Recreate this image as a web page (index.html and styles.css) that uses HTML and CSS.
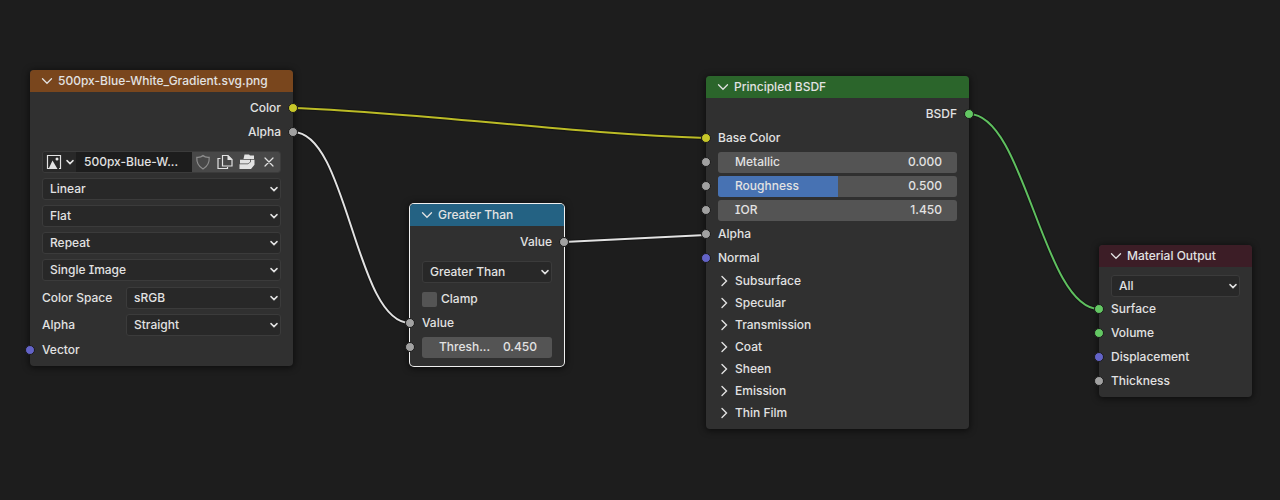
FILE: index.html
```html
<!DOCTYPE html>
<html lang="en">
<head>
<meta charset="utf-8">
<title>Shader Editor</title>
<link rel="stylesheet" href="styles.css">
</head>
<body>
<svg class="defs" aria-hidden="true">
  <symbol id="down" viewBox="0 0 12 12"><path d="M1.5 3.8 6 8.3l4.500-4.500" fill="none" stroke="currentColor" stroke-width="1.3" stroke-linecap="round"/></symbol>
  <symbol id="right" viewBox="0 0 12 12"><path d="M4 1.500 8.500 6 4 10.500" fill="none" stroke="currentColor" stroke-width="1.4" stroke-linecap="round"/></symbol>
  <symbol id="drop" viewBox="0 0 8 8"><path d="M1 2.600 4 5.600l3-3" fill="none" stroke="currentColor" stroke-width="1.5" stroke-linecap="round"/></symbol>
</svg>
<main class="canvas">
  <svg class="links" aria-hidden="true">
    <g class="link-shadow">
      <path d="M293 108C430 113 570 134 706 138"/>
      <path d="M293 132C348 132 355 323 410 323"/>
      <path d="M564 242 706 235"/>
      <path d="M969 114C1025 114 1043 309 1099 309"/>
    </g>
    <path class="link yellow" d="M293 108C430 113 570 134 706 138"/>
    <path class="link white" d="M293 132C348 132 355 323 410 323"/>
    <path class="link white" d="M564 242 706 235"/>
    <path class="link green" d="M969 114C1025 114 1043 309 1099 309"/>
  </svg>

  <section class="node node-image">
    <header class="head head-texture"><button class="fold" aria-label="Collapse"><svg><use href="#down"/></svg></button><h2>500px-Blue-White_Gradient.svg.png</h2></header>
    <div class="body">
      <div class="row out">Color<i class="socket color"></i></div>
      <div class="row out">Alpha<i class="socket float"></i></div>
      <div class="options">
        <div class="datablock">
          <button class="browse" aria-label="Browse image">
            <svg class="icon" viewBox="0 0 16 16"><path d="M4 14.500H1.500v-13h13v13H13" fill="none" stroke="currentColor" stroke-width="1.200"/><path d="M2.500 15 6.500 6.500l5 8.500z" fill="currentColor"/><circle cx="11" cy="5" r="1.500" fill="currentColor"/></svg>
            <svg class="caret"><use href="#drop"/></svg>
          </button>
          <input class="name" aria-label="Image name" value="500px-Blue-W...">
          <button class="tool dim" aria-label="Fake user"><svg class="icon" viewBox="0 0 16 16"><path d="M8 1.500C6.500 3 4 3.500 1.800 3.300 1.500 8 3.500 12.500 8 15c4.500-2.500 6.500-7 6.200-11.700C12 3.500 9.500 3 8 1.500z" fill="none" stroke="currentColor" stroke-width="1.200"/></svg></button>
          <button class="tool" aria-label="New image"><svg class="icon" viewBox="0 0 16 16"><path d="M3.500 4.500H1v10h9.500V13M5.500 1.500h5.500l4 4v6.500H5.500z" fill="none" stroke="currentColor" stroke-width="1.200"/><path d="M10.500 1v5H15.500z" fill="currentColor"/></svg></button>
          <button class="tool" aria-label="Open image"><svg class="icon" viewBox="0 0 16 16"><path d="M5.500.5H10l1 1h4V5H4.500zM1 5.800h10V8L9 9.500H1zM.500 10.300H9L11.800 8V5.800h3.700v5L12 15H.500z" fill="currentColor"/></svg></button>
          <button class="tool" aria-label="Unlink"><svg class="icon" viewBox="0 0 16 16"><path d="m4 4 8 8m0-8-8 8" fill="none" stroke="currentColor" stroke-width="1.200" stroke-linecap="round"/></svg></button>
        </div>
        <div class="menu"><select aria-label="Interpolation"><option>Linear</option></select><svg class="caret"><use href="#drop"/></svg></div>
        <div class="menu"><select aria-label="Projection"><option>Flat</option></select><svg class="caret"><use href="#drop"/></svg></div>
        <div class="menu"><select aria-label="Extension"><option>Repeat</option></select><svg class="caret"><use href="#drop"/></svg></div>
        <div class="menu"><select aria-label="Source"><option>Single Image</option></select><svg class="caret"><use href="#drop"/></svg></div>
      </div>
      <div class="props">
        <label for="space">Color Space</label>
        <div class="menu"><select id="space"><option>sRGB</option></select><svg class="caret"><use href="#drop"/></svg></div>
        <label for="alpha">Alpha</label>
        <div class="menu"><select id="alpha"><option>Straight</option></select><svg class="caret"><use href="#drop"/></svg></div>
      </div>
      <div class="row"><i class="socket vector"></i>Vector</div>
    </div>
  </section>

  <section class="node node-math">
    <header class="head head-math"><button class="fold" aria-label="Collapse"><svg><use href="#down"/></svg></button><h2>Greater Than</h2></header>
    <div class="body">
      <div class="row out">Value<i class="socket float"></i></div>
      <div class="options">
        <div class="menu"><select aria-label="Operation"><option>Greater Than</option></select><svg class="caret"><use href="#drop"/></svg></div>
      </div>
      <label class="row check"><input type="checkbox">Clamp</label>
      <div class="row"><i class="socket float"></i>Value</div>
      <div class="row"><i class="socket float"></i><div class="field"><label for="threshold">Thresh...</label><input id="threshold" value="0.450"></div></div>
    </div>
  </section>

  <section class="node node-bsdf">
    <header class="head head-shader"><button class="fold" aria-label="Collapse"><svg><use href="#down"/></svg></button><h2>Principled BSDF</h2></header>
    <div class="body">
      <div class="row out">BSDF<i class="socket shader"></i></div>
      <div class="row"><i class="socket color"></i>Base Color</div>
      <div class="row"><i class="socket float"></i><div class="field"><label for="metallic">Metallic</label><input id="metallic" value="0.000"></div></div>
      <div class="row"><i class="socket float"></i><div class="field"><span class="fill" style="width:50%"></span><label for="roughness">Roughness</label><input id="roughness" value="0.500"></div></div>
      <div class="row"><i class="socket float"></i><div class="field"><label for="ior">IOR</label><input id="ior" value="1.450"></div></div>
      <div class="row"><i class="socket float"></i>Alpha</div>
      <div class="row"><i class="socket vector"></i>Normal</div>
      <button class="panel"><svg><use href="#right"/></svg>Subsurface</button>
      <button class="panel"><svg><use href="#right"/></svg>Specular</button>
      <button class="panel"><svg><use href="#right"/></svg>Transmission</button>
      <button class="panel"><svg><use href="#right"/></svg>Coat</button>
      <button class="panel"><svg><use href="#right"/></svg>Sheen</button>
      <button class="panel"><svg><use href="#right"/></svg>Emission</button>
      <button class="panel"><svg><use href="#right"/></svg>Thin Film</button>
    </div>
  </section>

  <section class="node node-output">
    <header class="head head-output"><button class="fold" aria-label="Collapse"><svg><use href="#down"/></svg></button><h2>Material Output</h2></header>
    <div class="body">
      <div class="menu"><select aria-label="Target"><option>All</option></select><svg class="caret"><use href="#drop"/></svg></div>
      <div class="row"><i class="socket shader"></i>Surface</div>
      <div class="row"><i class="socket shader"></i>Volume</div>
      <div class="row"><i class="socket vector"></i>Displacement</div>
      <div class="row"><i class="socket float"></i>Thickness</div>
    </div>
  </section>
</main>
</body>
</html>
```
FILE: styles.css
```css
* { box-sizing: border-box; }

body {
  margin: 0;
  background: #1d1d1d;
  color: #e2e2e2;
  font: 500 12px/22px Inter, "Liberation Sans", sans-serif;
  font-feature-settings: "cv08";
}

button, input, select {
  margin: 0;
  padding: 0;
  border: 0;
  background: none;
  color: inherit;
  font: inherit;
  font-feature-settings: inherit;
}

.defs { position: absolute; width: 0; height: 0; }

.canvas {
  position: relative;
  min-height: 100vh;
  overflow: hidden;
}

.links { position: absolute; inset: 0; width: 100%; height: 100%; fill: none; }
.link-shadow { stroke: #151515; stroke-width: 4; }
.link { stroke-width: 2; }
.yellow { stroke: #bcbc26; }
.white { stroke: #e2e2e2; }
.green { stroke: #5fc05f; }

/* Nodes */
.node {
  position: absolute;
  border-radius: 4px;
  background: #303030;
  box-shadow: 0 1px 6px 1px rgba(0, 0, 0, .55);
}
.node-image { left: 30px; top: 70px; width: 263px; }
.node-math {
  left: 410px;
  top: 204px;
  width: 154px;
  box-shadow: 0 0 0 1px #f0f0f0, 0 1px 6px 2px rgba(0, 0, 0, .55);
}
.node-bsdf { left: 706px; top: 76px; width: 263px; }
.node-output { left: 1099px; top: 245px; width: 153px; }

.head {
  display: flex;
  align-items: center;
  gap: 5px;
  height: 22px;
  padding: 0 11px;
  border-radius: 4px 4px 0 0;
}
.head-texture { background: #79461d; }
.head-math { background: #246283; }
.head-shader { background: #2b652b; }
.head-output { background: #3c1d26; }
.head h2 { margin: 0; font: inherit; white-space: nowrap; }
.fold { display: flex; }
.fold svg, .panel svg { width: 12px; height: 12px; }

.body { padding: 4px 12px; }
.node-math .body { padding-bottom: 7px; }
.node-bsdf .body { padding-bottom: 5px; }
.node-output .body { padding-top: 8px; }

.row { position: relative; display: flex; align-items: center; height: 24px; }
.out { justify-content: flex-end; }

.socket {
  position: absolute;
  left: -17px;
  width: 10px;
  height: 10px;
  border: 1px solid #1a1a1a;
  border-radius: 50%;
}
.out .socket { left: auto; right: -17px; }
.color { background: #c7c729; }
.float { background: #a1a1a1; }
.vector { background: #6363c7; }
.shader { background: #63c763; }

/* Controls */
.options { display: grid; gap: 5px; padding-top: 7px; }
.node-math .options { padding-bottom: 4px; }

.props {
  display: grid;
  grid-template-columns: 84px 1fr;
  gap: 5px 0;
  padding: 6px 0 2px;
}

.menu { position: relative; }
.menu select {
  display: block;
  width: 100%;
  height: 22px;
  padding: 0 20px 0 7px;
  appearance: none;
  border: 1px solid #3b3b3b;
  border-radius: 3px;
  background: #282828;
  line-height: 20px;
}
.caret { width: 8px; height: 8px; }
.menu .caret { position: absolute; right: 3px; top: 7px; }

.datablock {
  display: flex;
  height: 22px;
  border: 1px solid #3b3b3b;
  border-radius: 3px;
  overflow: hidden;
}
.browse { display: flex; align-items: center; gap: 4px; width: 33px; padding-left: 3px; background: #282828; }
.name { flex: 1; min-width: 0; padding-left: 8px; background: #1d1d1d; }
.tool { display: grid; place-items: center; width: 22px; background: #484848; }
.icon { width: 16px; height: 16px; }
.dim { color: #8c8c8c; }

.check { gap: 4px; }
.check input { width: 15px; height: 15px; appearance: none; border-radius: 2px; background: #545454; }

.field {
  position: relative;
  display: flex;
  flex: 1;
  min-width: 0;
  height: 21px;
  align-items: center;
  padding: 0 15px 0 17px;
  border-radius: 3px;
  background: #545454;
  overflow: hidden;
}
.field label { position: relative; white-space: nowrap; }
.field input { position: relative; flex: 1; min-width: 0; text-align: right; }
.fill { position: absolute; inset: 0 auto 0 0; background: #4772b3; }

.panel { display: flex; align-items: center; gap: 5px; width: 100%; height: 22px; }
```
